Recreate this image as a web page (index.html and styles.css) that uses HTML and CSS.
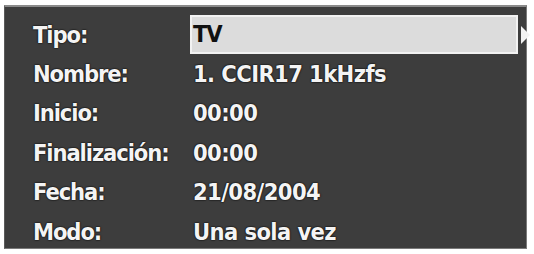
FILE: index.html
```html
<!DOCTYPE html>
<html lang="es">
<head>
<meta charset="utf-8">
<title>Temporizador</title>
<link rel="stylesheet" href="styles.css">
</head>
<body>
<div class="panel">
  <div class="row">
    <span class="label">Tipo:</span>
    <div class="field">
      <span class="field-box">TV</span>
      <svg class="arrow" width="11" height="20" viewBox="0 0 11 20"><path d="M1 1 L10 10 L1 19 Z" fill="#f2f2f2"/></svg>
    </div>
  </div>
  <div class="row"><span class="label">Nombre:</span><span class="value">1. CCIR17 1kHzfs</span></div>
  <div class="row"><span class="label">Inicio:</span><span class="value">00:00</span></div>
  <div class="row"><span class="label">Finalización:</span><span class="value">00:00</span></div>
  <div class="row"><span class="label">Fecha:</span><span class="value">21/08/2004</span></div>
  <div class="row"><span class="label">Modo:</span><span class="value">Una sola vez</span></div>
</div>
</body>
</html>
```
FILE: styles.css
```css
html, body {
  margin: 0;
  padding: 0;
  background: #ffffff;
}
body {
  width: 534px;
  height: 254px;
  overflow: hidden;
}
.panel {
  margin: 5px 0 0 4px;
  width: 523px;
  height: 244px;
  box-sizing: border-box;
  background: #3d3d3d;
  border: 1px solid #7a7a7a;
  border-top: 2px solid #8a8a8a;
  border-left-color: #5a5a5a;
  padding: 8px 0 0 28px;
  font-family: "DejaVu Sans Condensed", "Liberation Sans", sans-serif;
  font-weight: bold;
  font-size: 23.5px;
  letter-spacing: -1.1px;
  color: #f4f4f4;
  text-shadow: 0 0 2px #000, 0 0 1px #000;
}
.row {
  display: grid;
  grid-template-columns: 157px 1fr;
  align-items: center;
  height: 39.4px;
}
.label, .value {
  line-height: 26px;
}
.value {
  padding-left: 3px;
  letter-spacing: -0.6px;
}
.field {
  display: flex;
  align-items: center;
  gap: 2px;
  margin-right: -5px;
}
.field-box {
  flex: 1;
  height: 39px;
  box-sizing: border-box;
  background: #dcdcdc;
  border: 2px solid #f2f2f2;
  color: #111;
  text-shadow: none;
  padding: 0 0 0 1px;
  line-height: 35px;
}
.arrow {
  display: block;
}
```
